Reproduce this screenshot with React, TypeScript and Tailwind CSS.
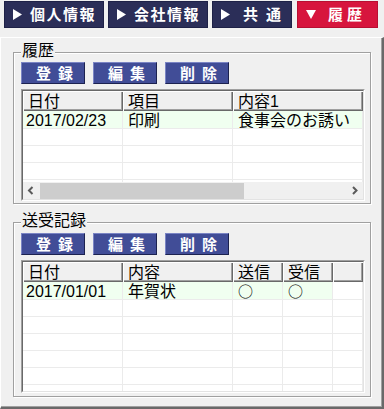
import React from "react";

const FONT = "font-['Liberation_Sans','Noto_Sans_CJK_JP',sans-serif]";

function TriRight() {
  return (
    <svg width="9" height="11" viewBox="0 0 9 11" className="shrink-0">
      <polygon points="0,0 9,5.5 0,11" fill="#fff" />
    </svg>
  );
}
function TriDown() {
  return (
    <svg width="10" height="9" viewBox="0 0 10 9" className="shrink-0">
      <polygon points="0,0 10,0 5,9" fill="#fff" />
    </svg>
  );
}

function Tab({
  label,
  className,
  textClass,
  down,
}: {
  label: string;
  className: string;
  textClass: string;
  down?: boolean;
}) {
  return (
    <div className={"h-[27px] flex items-center pl-[8px] border " + className}>
      {down ? <TriDown /> : <TriRight />}
      <span className={"text-white font-bold text-[15px] leading-[15px] whitespace-nowrap " + textClass}>{label}</span>
    </div>
  );
}

function Btn({ label }: { label: string }) {
  return (
    <div className="w-[64px] h-[22px] bg-[#414d97] border border-t-[#7a84c4] border-l-[#7a84c4] border-r-[#1c2250] border-b-[#1c2250] flex items-center pl-[14px] text-white font-bold text-[15px] leading-[15px] tracking-[7px] whitespace-nowrap">
      {label}
    </div>
  );
}

function Chevron({ right }: { right?: boolean }) {
  return (
    <svg width="17" height="17" viewBox="0 0 17 17">
      {right ? (
        <polyline points="7,5 10.5,8.5 7,12" fill="none" stroke="#5a5a5a" strokeWidth="2" />
      ) : (
        <polyline points="9.5,5 6,8.5 9.5,12" fill="none" stroke="#5a5a5a" strokeWidth="2" />
      )}
    </svg>
  );
}

type Col = { title: string; w: string; pad: string };

function Table({
  cols,
  rows,
  hClass,
  scroll,
  selectedCols,
}: {
  cols: Col[];
  rows: string[][];
  hClass: string;
  scroll?: boolean;
  selectedCols: number;
}) {
  return (
    <div className={"mt-[5px] w-[344px] border border-t-[#a0a0a0] border-l-[#a0a0a0] border-r-white border-b-white " + hClass}>
      <div className="h-full border border-t-[#696969] border-l-[#696969] border-r-[#e3e3e3] border-b-[#e3e3e3] bg-white flex flex-col overflow-hidden">
        <div className="relative z-10 flex h-[20px] shrink-0 bg-white">
          {cols.map((c, i) => (
            <div
              key={i}
              className={
                "h-[20px] shrink-0 bg-[#f0f0f0] shadow-[inset_1px_1px_0_#fff,inset_-1px_-1px_0_#696969,inset_-2px_-2px_0_#a0a0a0] pl-[5px] text-[16px] leading-[21px] text-black whitespace-nowrap overflow-hidden " +
                c.w
              }
            >
              {c.title}
            </div>
          ))}
        </div>
        <div className="flex-1 min-h-0">
          {rows.map((r, ri) => (
            <div key={ri} className={"flex shrink-0 " + (ri === 0 ? "h-[18px]" : "h-[17px]")}>
              {cols.map((c, ci) => {
                const v = r[ci] ?? "";
                const circle = v === "○";
                return (
                  <div
                    key={ci}
                    className={
                      "h-full shrink-0 border-r border-b border-[#ebebeb] text-[16px] leading-[19px] text-black whitespace-nowrap " +
                      (circle ? "" : "overflow-hidden ") +
                      c.w +
                      " " +
                      c.pad +
                      " " +
                      (ri === 0 && ci < selectedCols ? "bg-[#f0fff0]" : "bg-white")
                    }
                  >
                    {circle ? (
                      <span className="inline-block align-top h-[17px] font-['Noto_Sans_CJK_JP',sans-serif] text-[15px] leading-[17px]">
                        ○
                      </span>
                    ) : (
                      v
                    )}
                  </div>
                );
              })}
            </div>
          ))}
        </div>
        {scroll && (
          <div className="relative z-10 h-[17px] shrink-0 flex bg-[#f0f0f0]">
            <div className="w-[17px] h-[17px] shrink-0">
              <Chevron />
            </div>
            <div className="flex-1 flex items-center">
              <div className="w-[204px] h-[16px] bg-[#cdcdcd]" />
            </div>
            <div className="w-[17px] h-[17px] shrink-0">
              <Chevron right />
            </div>
          </div>
        )}
      </div>
    </div>
  );
}

function Group({
  title,
  hClass,
  ptClass,
  children,
}: {
  title: string;
  hClass: string;
  ptClass: string;
  children: React.ReactNode;
}) {
  return (
    <div
      className={
        "relative border border-[#a0a0a0] shadow-[inset_1px_1px_0_#fff,1px_1px_0_#fff] pl-[7px] " + hClass + " " + ptClass
      }
    >
      <span className="absolute left-[7px] top-[-10px] bg-[#f0f0f0] px-[1px] text-[16px] leading-[16px] text-black whitespace-nowrap">
        {title}
      </span>
      {children}
    </div>
  );
}

export default function App() {
  const cols1: Col[] = [
    { title: "日付", w: "w-[100px]", pad: "pl-[3px]" },
    { title: "項目", w: "w-[110px]", pad: "pl-[5px]" },
    { title: "内容1", w: "w-[130px]", pad: "pl-[5px]" },
  ];
  const rows1 = [["2017/02/23", "印刷", "食事会のお誘い"], [], [], [], [], []];
  const cols2: Col[] = [
    { title: "日付", w: "w-[100px]", pad: "pl-[3px]" },
    { title: "内容", w: "w-[110px]", pad: "pl-[5px]" },
    { title: "送信", w: "w-[50px]", pad: "pl-[5px]" },
    { title: "受信", w: "w-[50px]", pad: "pl-[5px]" },
    { title: "", w: "w-[30px]", pad: "pl-[5px]" },
  ];
  const rows2 = [["2017/01/01", "年賀状", "○", "○", ""], [], [], [], [], [], [], []];

  return (
    <div className={"w-[384px] h-[409px] bg-[#f0f0f0] flex flex-col overflow-hidden " + FONT}>
      <div className="h-[28px] pt-[1px] pl-[4px] flex gap-[4px] shrink-0">
        <Tab label="個人情報" className="w-[100px] bg-[#2b2e58] border-[#1e2147]" textClass="ml-[8px] tracking-[1.5px]" />
        <Tab label="会社情報" className="w-[100px] bg-[#2b2e58] border-[#1e2147]" textClass="ml-[8px] tracking-[1.5px]" />
        <Tab label="共通" className="w-[80px] bg-[#2b2e58] border-[#1e2147]" textClass="ml-[13px] tracking-[8px]" />
        <Tab label="履歴" className="w-[81px] ml-[1px] bg-[#d7153d] border-[#b80f32]" textClass="ml-[12px] tracking-[4px]" down />
      </div>
      <div className="mt-[9px] flex-1 flex flex-col border-t border-l border-t-white border-l-white border-r-2 border-b-2 border-r-[#696969] border-b-[#696969] shadow-[inset_-1px_-1px_0_#a0a0a0] pl-[12px] pr-[11px] pt-[14px]">
        <Group title="履歴" hClass="h-[152px]" ptClass="pt-[9px]">
          <div className="flex gap-[8px]">
            <Btn label="登録" />
            <Btn label="編集" />
            <Btn label="削除" />
          </div>
          <Table cols={cols1} rows={rows1} hClass="h-[112px]" scroll selectedCols={3} />
        </Group>
        <div className="h-[18px] shrink-0" />
        <Group title="送受記録" hClass="h-[175px]" ptClass="pt-[10px]">
          <div className="flex gap-[8px]">
            <Btn label="登録" />
            <Btn label="編集" />
            <Btn label="削除" />
          </div>
          <Table cols={cols2} rows={rows2} hClass="h-[133px]" selectedCols={4} />
        </Group>
      </div>
    </div>
  );
}
